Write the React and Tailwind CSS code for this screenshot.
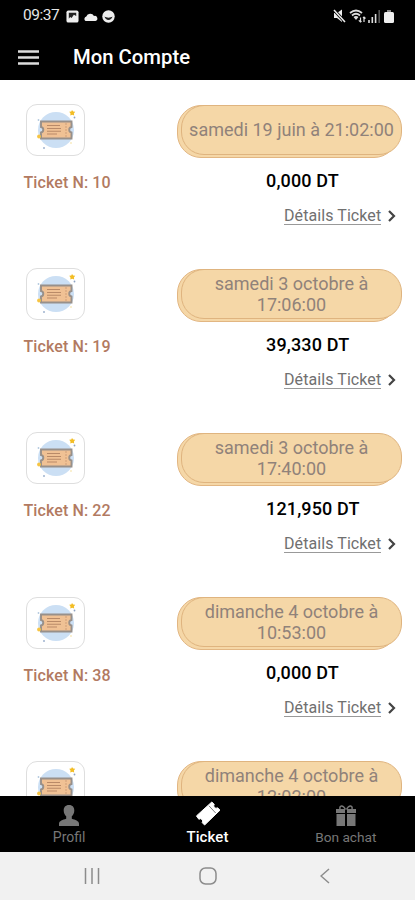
const tickets = [
  { id: 10, date: ["samedi 19 juin à 21:02:00"], total: "0,000 DT" },
  { id: 19, date: ["samedi 3 octobre à", "17:06:00"], total: "39,330 DT" },
  { id: 22, date: ["samedi 3 octobre à", "17:40:00"], total: "121,950 DT" },
  { id: 38, date: ["dimanche 4 octobre à", "10:53:00"], total: "0,000 DT" },
  { id: 39, date: ["dimanche 4 octobre à", "12:02:00"] },
];

const TicketArt = () => (
  <svg viewBox="0 0 58 52" className="h-[52px] w-[58px] shrink-0">
    <circle cx="29" cy="26" r="18" fill="#cbdff4" />
    <path
      d="M14 17.500h30.500v5.500a2.800 2.800 0 0 0 0 5.500v6H14v-6a2.800 2.800 0 0 0 0-5.500z"
      fill="#f0c194"
      stroke="#98908a"
      strokeWidth="1.900"
    />
    <path d="M39 19v14.500" stroke="#cf9e78" strokeWidth="1" strokeDasharray="2 1" />
    <path d="M20 21.500h13M20 24.500h14M20 27.300h14M20 30h10" stroke="#b98a68" strokeWidth="1.100" />
    <path d="m45 6 1.200 1.600 2 .2-1.300 1.700.3 2-2-.8-1.900.8.200-2-1.300-1.700 2.100-.2z" fill="#f3bd24" />
    <circle cx="12" cy="32.500" r="1.900" fill="#f6c443" />
    <circle cx="47.500" cy="13.500" r=".9" fill="#8da2c2" />
    <circle cx="11.500" cy="16" r=".9" fill="#b3c9df" />
    <circle cx="17" cy="44" r="1" fill="#9fb3cf" />
    <circle cx="44" cy="39" r=".8" fill="#f3dc94" />
  </svg>
);

const DateBadge = ({ lines }) => (
  <div className="relative mt-[.5px] h-[53px] w-[225px]">
    <div className="absolute inset-y-0 left-0 w-[221px] rounded-[24px] border border-[#e2b682] bg-[#f5d7a7]" />
    <div className="absolute top-0 right-0 flex h-[50px] w-[221px] flex-col items-center justify-center rounded-[23px] border border-[#dfb47f] bg-[#f5d7a7] text-[18px] leading-[21px] whitespace-nowrap text-[#90827a]">
      {lines.map((line) => (
        <span key={line}>{line}</span>
      ))}
    </div>
  </div>
);

const TicketRow = ({ ticket }) => (
  <div className="flex h-[164.200px] shrink-0 justify-between pr-[13px] pl-[23px]">
    <div>
      <div className="ml-[3px] flex h-[52px] w-[59px] items-center justify-center rounded-[11px] border border-[#dedede]">
        <TicketArt />
      </div>
      {ticket.total && (
        <p className="mt-[16px] ml-[.5px] text-[16px] leading-[21px] font-medium tracking-[.1px] text-[#b27a61]">
          Ticket N: {ticket.id}
        </p>
      )}
    </div>
    <div className="w-[225px]">
      <DateBadge lines={ticket.date} />
      {ticket.total && (
        <>
          <p className="mt-[12px] ml-[89px] text-[18px] leading-[22px] font-medium tracking-[.15px] text-black">
            {ticket.total}
          </p>
          <button
            type="button"
            className="mt-[15px] ml-[107px] flex items-center text-[16px] leading-[20px] tracking-[.08px] text-[#707070]"
          >
            <span className="border-b border-[#999] leading-[17px]">Détails Ticket</span>
            <svg viewBox="0 0 8 12" className="ml-[7px] h-[12px] w-[8px]" fill="none">
              <path d="m1 1 5 5-5 5" stroke="#444" strokeWidth="2.200" />
            </svg>
          </button>
        </>
      )}
    </div>
  </div>
);

const StatusBar = () => (
  <div className="flex h-8 items-center justify-between pr-[21px] pl-[23px]">
    <div className="flex items-center gap-[4px]">
      <span className="w-[39px] text-[15.500px] tracking-[-.5px] text-[#e6e6e6]">09:37</span>
      <svg viewBox="0 0 14 14" className="h-[13px] w-[13px]">
        <rect x=".5" y=".5" width="13" height="13" rx="2" fill="#eee" />
        <path d="M3 9.500V3h8v3.500L8.500 5 6 8.500l-1.500-1z" fill="#222" />
      </svg>
      <svg viewBox="0 0 14 9" className="h-[9px] w-[15px]" fill="#eee">
        <path d="M2 9a2.500 2.500 0 0 1 .8-4.500A4.200 4.200 0 0 1 10.500 4 2.600 2.600 0 0 1 12 9z" />
      </svg>
      <svg viewBox="0 0 13 13" className="h-[13px] w-[13px]">
        <circle cx="6.500" cy="6.500" r="6.200" fill="#eee" />
        <path d="M2.500 6.500c1 4.500 7 4.500 8 0-2 1.500-6 1.500-8 0z" fill="#222" />
      </svg>
    </div>
    <div className="flex items-center">
      <svg viewBox="0 0 13 14" className="h-[14px] w-[13px]">
        <path d="M1 4h3l5-3.500v12.500L4 9H1z" fill="#eee" />
        <path d="m1 1 11 12" stroke="#000" strokeWidth="3" />
        <path d="m1 1 11 12" stroke="#eee" strokeWidth="1.500" />
      </svg>
      <svg viewBox="0 0 17 14" className="ml-[3px] h-[14px] w-[17px]" fill="none">
        <path d="M1 4q6-5 12 0M3 6.500q4-3.500 8 0" stroke="#ddd" strokeWidth="1.800" />
        <path d="M4.500 8q2.500-2 5 0L7 11z" fill="#ddd" />
        <path d="M11.500 8.500V13m-1.700-1.700L11.500 13l1-1M15 13V8m1.500 1.500L15 8l-1 1" stroke="#ddd" strokeWidth="1.200" />
      </svg>
      <svg viewBox="0 0 13 13" className="ml-[2px] h-[13px] w-[13px]">
        <path d="M1 10v3M4.300 7v6M7.600 4v9" stroke="#ddd" strokeWidth="1.600" />
        <path d="M11.200 0v13" stroke="#555" strokeWidth="1.600" />
      </svg>
      <svg viewBox="0 0 10 13" className="ml-[3px] h-[13px] w-[10px]" fill="#eee">
        <path d="M3 0h4v2H3z" fill="#888" />
        <rect y="2" width="10" height="11" rx="1.500" />
      </svg>
    </div>
  </div>
);

const TabBar = () => (
  <nav className="grid h-[56px] shrink-0 grid-cols-3 bg-black text-[14px] leading-[16px] text-[#777]">
    <div className="flex flex-col items-center pt-[9px]">
      <svg viewBox="0 0 20 21" className="h-[21px] w-[20px]" fill="#777">
        <path d="M10 0c3.700 0 5.300 2.400 5.300 5.500 0 2.500-1 4.600-2.500 5.700v2.500c3.300 1.200 7.200 2 7.200 5V21H0v-2.300c0-3 3.900-3.800 7.200-5v-2.500C5.700 10.100 4.700 8 4.700 5.500 4.700 2.400 6.300 0 10 0z" />
      </svg>
      <span className="mt-[3px]">Profil</span>
    </div>
    <div className="flex flex-col items-center pt-[5px] text-[15px] font-medium tracking-[.1px] text-white">
      <svg viewBox="0 0 26 26" className="h-[25px] w-[25px]">
        <path
          d="M1.500 15.500 17.500 1l2.500 2.500a2.500 2.500 0 0 0 3.500 3.500L26 9.500 10 25l-2.500-2.500a2.500 2.500 0 0 0-3.500-3.500z"
          fill="#fff"
          stroke="#fff"
          strokeLinejoin="round"
        />
        <path d="m14.500 5 7 7.500" stroke="#777" strokeWidth="1" />
      </svg>
      <span className="mt-[3px]">Ticket</span>
    </div>
    <div className="flex flex-col items-center pt-[9px]">
      <svg viewBox="0 0 20 21" className="h-[21px] w-[20px]" fill="#777">
        <path d="M0 4h9v4H0zM11 4h9v4h-9zM.5 9H9v12H.5zM11 9h8.500v12H11z" />
        <path d="M9.500 4.500C7-.5 3 0 4 4.500M10.500 4.500C13-.5 17 0 16 4.500" fill="none" stroke="#777" strokeWidth="1.500" />
      </svg>
      <span className="mt-[3px] text-[13.700px]">Bon achat</span>
    </div>
  </nav>
);

const SystemNav = () => (
  <div className="grid h-[48px] shrink-0 grid-cols-3 items-center bg-[#f1f1f1]">
    <svg viewBox="0 0 16 16" className="ml-[84px] h-4 w-4" fill="none" stroke="#8c8c8c" strokeWidth="1.500">
      <path d="M1.500 0v16M8 0v16M14.500 0v16" />
    </svg>
    <svg viewBox="0 0 18 18" className="ml-[61px] h-[18px] w-[18px]" fill="none" stroke="#8c8c8c" strokeWidth="1.500">
      <rect x="1" y="1" width="16" height="16" rx="5.500" />
    </svg>
    <svg viewBox="0 0 10 16" className="ml-[43px] h-4 w-[10px]" fill="none" stroke="#8c8c8c" strokeWidth="1.500">
      <path d="M9 1 1 8l8 7" />
    </svg>
  </div>
);

export default function App() {
  return (
    <div className="flex h-[900px] w-[415px] flex-col overflow-hidden bg-white font-[Roboto,sans-serif]">
      <header className="h-[80px] shrink-0 bg-black">
        <StatusBar />
        <div className="flex h-[50px] items-center pl-[18px]">
          <svg viewBox="0 0 21 15" className="h-[15px] w-[21px]" stroke="#ddd" strokeWidth="2.500">
            <path d="M0 1.500h21M0 7.500h21M0 13.500h21" />
          </svg>
          <h1 className="mt-[1px] ml-[34px] text-[20.300px] font-medium text-white">Mon Compte</h1>
        </div>
      </header>
      <main className="flex min-h-0 flex-1 flex-col overflow-hidden pt-[24px]">
        {tickets.map((ticket) => (
          <TicketRow key={ticket.id} ticket={ticket} />
        ))}
      </main>
      <TabBar />
      <SystemNav />
    </div>
  );
}
